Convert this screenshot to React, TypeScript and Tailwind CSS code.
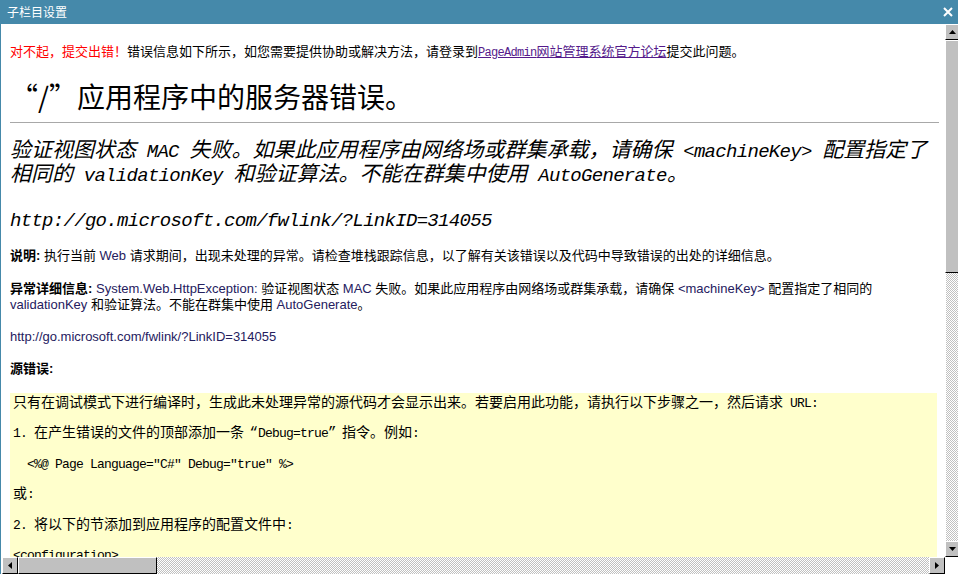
import React from 'react';

// 宋体风格：拉丁字符用等宽字体，中文用 Noto
const SONG = "font-['Liberation_Mono','Noto_Sans_CJK_SC',monospace]";
const SANS = "font-['Liberation_Sans','Noto_Sans_CJK_SC',sans-serif]";

type Dir = 'up' | 'down' | 'left' | 'right';

function Arrow({ dir }: { dir: Dir }) {
  const vert = dir === 'up' || dir === 'down';
  const pts = {
    up: '0,4 7,4 3.5,0',
    down: '0,0 7,0 3.5,4',
    left: '4,0 4,7 0,3.5',
    right: '0,0 0,7 4,3.5',
  }[dir];
  return (
    <svg width={vert ? 7 : 4} height={vert ? 4 : 7} viewBox={vert ? '0 0 7 4' : '0 0 4 7'}>
      <polygon points={pts} fill="#000" />
    </svg>
  );
}

// 半角拉丁字符（13px 行内）
function M({ children }: { children: React.ReactNode }) {
  return <span className="text-[12px] tracking-[-0.7px]">{children}</span>;
}

// 源码框里的半角字符（14px 行内）
function B({ children }: { children: React.ReactNode }) {
  return <span className="text-[13px] tracking-[-0.8px]">{children}</span>;
}

// h2 里的拉丁字符
function H({ children }: { children: React.ReactNode }) {
  return <span className="text-[19px] tracking-[-0.7px]">{children}</span>;
}

// 说明区里的英文
function E({ children }: { children: React.ReactNode }) {
  return <span className="text-[#25205e]">{children}</span>;
}

function Content() {
  return (
    <div className="min-w-0 flex-1 overflow-hidden pl-[9px] pr-[6px] text-black">
      <p className={`${SONG} mt-[21px] h-[16px] whitespace-nowrap text-[13px] leading-[16px]`}>
        <span className="text-[#ff0000]">对不起，提交出错！</span>
        错误信息如下所示，如您需要提供协助或解决方法，请登录到
        <span className="text-[#551a8b] underline">
          <M>PageAdmin</M>网站管理系统官方论坛
        </span>
        提交此问题。
      </p>

      <h1 className="mt-[20px] h-[30px] whitespace-nowrap font-['Noto_Sans_CJK_SC',sans-serif] text-[28px] leading-[30px]">
        <span className="inline-block w-[28px] text-right">“</span>/<span className="inline-block w-[28px] text-left">”</span>应用程序中的服务器错误。
      </h1>

      <div className="mt-[11px] h-px bg-[#a8a8a8]" />

      <h2 className={`${SONG} mt-[17px] h-[48px] whitespace-nowrap text-[21px] italic leading-[24px]`}>
        <div className="h-[24px]">
          验证视图状态<H> MAC </H>失败。如果此应用程序由网络场或群集承载，请确保<H> &lt;machineKey&gt; </H>配置指定了
        </div>
        <div className="h-[24px]">
          相同的<H> validationKey </H>和验证算法。不能在群集中使用<H> AutoGenerate</H>。
        </div>
      </h2>

      <h2 className={`${SONG} mt-[21px] h-[24px] whitespace-nowrap text-[19px] tracking-[-0.7px] italic leading-[24px]`}>
        http://go.microsoft.com/fwlink/?LinkID=314055
      </h2>

      <div className={`${SANS} text-[13px] leading-[16px]`}>
        <p className="mt-[15px] h-[16px] whitespace-nowrap">
          <b>说明:</b> 执行当前 <E>Web</E> 请求期间，出现未处理的异常。请检查堆栈跟踪信息，以了解有关该错误以及代码中导致错误的出处的详细信息。
        </p>
        <div className="mt-[17px] whitespace-nowrap">
          <div className="h-[16px]">
            <b>异常详细信息:</b> <E>System.Web.HttpException:</E> 验证视图状态 <E>MAC</E> 失败。如果此应用程序由网络场或群集承载，请确保 <E>&lt;machineKey&gt;</E> 配置指定了相同的
          </div>
          <div className="h-[16px]">
            <E>validationKey</E> 和验证算法。不能在群集中使用 <E>AutoGenerate</E>。
          </div>
        </div>
        <p className="mt-[16px] h-[16px] whitespace-nowrap">
          <E>http://go.microsoft.com/fwlink/?LinkID=314055</E>
        </p>
        <p className="mt-[16px] h-[16px] whitespace-nowrap">
          <b>源错误:</b>
        </p>
      </div>

      <div className={`${SONG} mt-[16px] mr-[2px] flex flex-col gap-[15.4px] bg-[#ffffcc] pl-[3px] pt-[3px] text-[14px] leading-[15px] whitespace-pre`}>
        <div className="h-[15px]">只有在调试模式下进行编译时，生成此未处理异常的源代码才会显示出来。若要启用此功能，请执行以下步骤之一，然后请求<B> URL:</B></div>
        <div className="h-[15px]">
          <B>1. </B>在产生错误的文件的顶部添加一条<span className="inline-block w-[14px] text-right">“</span><B>Debug=true</B><span className="inline-block w-[14px] text-left">”</span>指令。例如<B>:</B>
        </div>
        <div className="h-[15px]"><B>  &lt;%@ Page Language="C#" Debug="true" %&gt;</B></div>
        <div className="h-[15px]">或<B>:</B></div>
        <div className="h-[15px]"><B>2. </B>将以下的节添加到应用程序的配置文件中<B>:</B></div>
        <div className="h-[15px]"><B>&lt;configuration&gt;</B></div>
      </div>
    </div>
  );
}

function VScroll() {
  return (
    <div className="flex w-[13px] flex-col">
      <div className="flex h-[16px] items-center justify-center border-t border-l border-b border-t-white border-l-white border-b-black bg-[#c0c0c0] pl-[1px]">
        <Arrow dir="up" />
      </div>
      <div className="h-[233px] border-t border-l border-b border-t-white border-l-white border-b-black bg-[#c0c0c0]" />
      <div className="flex-1 border-l border-l-white bg-[image:repeating-conic-gradient(#c0c0c0_0%_25%,#ffffff_0%_50%)] bg-[length:2px_2px]" />
      <div className="flex h-[16px] items-center justify-center border-t border-l border-b border-t-white border-l-white border-b-black bg-[#c0c0c0] pl-[1px]">
        <Arrow dir="down" />
      </div>
    </div>
  );
}

function HScroll() {
  return (
    <div className="ml-[1px] flex h-[17px] shrink-0">
      <div className="flex w-[16px] items-center justify-center border border-t-white border-l-white border-b-black border-r-black bg-[#c0c0c0]">
        <Arrow dir="left" />
      </div>
      <div className="w-[139px] border border-t-white border-l-white border-b-black border-r-black bg-[#c0c0c0]" />
      <div className="flex-1 bg-[image:repeating-conic-gradient(#c0c0c0_0%_25%,#ffffff_0%_50%)] bg-[length:2px_2px]" />
      <div className="flex w-[16px] items-center justify-center border border-t-white border-l-white border-b-black border-r-black bg-[#c0c0c0]">
        <Arrow dir="right" />
      </div>
    </div>
  );
}

export default function App() {
  return (
    <div className="flex h-[578px] w-[958px] flex-col overflow-hidden bg-white">
      {/* 标题栏 */}
      <div className="flex h-[24px] shrink-0 items-center justify-between bg-[#4589aa] pl-[7px] pr-[5px]">
        <span className="font-['Noto_Sans_CJK_SC',sans-serif] text-[12px] leading-[12px] text-white">子栏目设置</span>
        <svg width="10" height="10" viewBox="0 0 10 10">
          <path d="M1 1L9 9M9 1L1 9" stroke="#fff" strokeWidth="2" />
        </svg>
      </div>

      <div className="flex h-[550px] shrink-0 border-l border-l-[#4589aa]">
        <div className="flex min-w-0 flex-1 flex-col">
          <Content />
          <HScroll />
        </div>
        <div className="flex w-[13px] shrink-0 flex-col">
          <div className="flex h-[533px]">
            <VScroll />
          </div>
          <div className="h-[17px] bg-white" />
        </div>
      </div>

      <div className="h-[4px] bg-white" />
    </div>
  );
}
